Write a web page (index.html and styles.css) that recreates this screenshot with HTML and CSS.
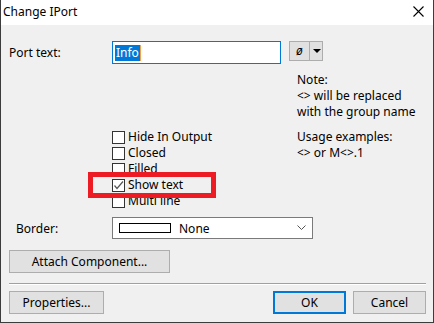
FILE: index.html
```html
<!DOCTYPE html>
<html lang="en">
<head>
    <meta charset="UTF-8">
    <title>Change IPort</title>
    <link rel="stylesheet" href="styles.css">
</head>
<body>
    <div class="window">
        <div class="titlebar">
            <span class="title">Change IPort</span>
            <svg class="close" width="11" height="11" viewBox="0 0 11 11">
                <path d="M0.5 0.5 L10.5 10.5 M10.5 0.5 L0.5 10.5" stroke="#000" stroke-width="1.1" fill="none"/>
            </svg>
        </div>

        <div class="content">
            <!-- Port text row -->
            <div class="port-row">
                <label class="label">Port text:</label>
                <div class="textbox"><span class="sel">Info</span><span class="caret"></span></div>
                <div class="split-btn">
                    <span class="split-main">ø</span>
                    <span class="split-arrow"></span>
                </div>
            </div>

            <div class="middle">
                <div class="checks">
                    <div class="check"><span class="box"></span>Hide In Output</div>
                    <div class="check"><span class="box"></span>Closed</div>
                    <div class="check"><span class="box"></span>Filled</div>
                    <div class="check"><span class="box checked">
                        <svg width="11" height="11" viewBox="0 0 11 11"><path d="M1.5 5.5 L4 8.5 L10 1.5" stroke="#555" stroke-width="1.2" fill="none"/></svg>
                    </span>Show text</div>
                    <div class="check"><span class="box"></span>Multi line</div>
                    <div class="highlight"></div>
                </div>
                <div class="note">
                    <div>Note:</div>
                    <div>&lt;&gt; will be replaced</div>
                    <div>with the group name</div>
                    <div class="gap">Usage examples:</div>
                    <div>&lt;&gt; or M&lt;&gt;.1</div>
                </div>
            </div>

            <div class="border-row">
                <label class="label label-border">Border:</label>
                <div class="combo">
                    <span class="swatch"></span>
                    <span class="combo-text">None</span>
                    <svg class="chevron" width="9" height="6" viewBox="0 0 9 6">
                        <path d="M0.5 0.5 L4.5 4.5 L8.5 0.5" stroke="#555" stroke-width="1" fill="none"/>
                    </svg>
                </div>
            </div>

            <button class="btn btn-attach">Attach Component...</button>

            <div class="separator"></div>

            <div class="bottom-row">
                <button class="btn btn-props">Properties...</button>
                <div class="right-btns">
                    <button class="btn btn-ok">OK</button>
                    <button class="btn btn-cancel">Cancel</button>
                </div>
            </div>
        </div>
    </div>
</body>
</html>
```

FILE: styles.css
```css
body {
    margin: 0;
    font-family: "Noto Sans", "Open Sans", sans-serif;
    font-size: 12px;
    color: #000;
    background: #f0f0f0;
}
.window {
    width: 434px;
    height: 323px;
    box-sizing: border-box;
    border: 1px solid #3c3c3c;
    border-top: none;
    background: #f0f0f0;
}
.titlebar {
    height: 25px;
    background: #fff;
    display: flex;
    align-items: center;
    justify-content: space-between;
    padding: 0 9px 2px 2px;
    box-sizing: border-box;
}
.title {
    font-size: 12px;
}
.content {
    padding: 16px 7px 0 8px;
}
.label {
    width: 103px;
    flex-shrink: 0;
}
.port-row {
    display: flex;
    align-items: flex-start;
    height: 23px;
}
.port-row .label {
    line-height: 23px;
}
.textbox {
    width: 169px;
    height: 23px;
    box-sizing: border-box;
    border: 1px solid #0078d7;
    background: #fff;
    display: flex;
    align-items: center;
    padding-left: 2px;
}
.sel {
    background: #0078d7;
    color: #fff;
    line-height: 16px;
    padding: 0 1px;
}
.caret {
    width: 1px;
    height: 16px;
    background: #f7a04a;
}
.split-btn {
    margin-left: 8px;
    width: 34px;
    height: 20px;
    box-sizing: border-box;
    border: 1px solid #adadad;
    background: #e1e1e1;
    display: flex;
}
.split-main {
    width: 19px;
    border-right: 1px solid #adadad;
    text-align: center;
    line-height: 18px;
    font-style: italic;
}
.split-arrow {
    flex: 1;
    position: relative;
}
.split-arrow::after {
    content: "";
    position: absolute;
    left: 3px;
    top: 7px;
    border-left: 4px solid transparent;
    border-right: 4px solid transparent;
    border-top: 4px solid #000;
}
.middle {
    display: flex;
    margin-top: 8px;
}
.checks {
    position: relative;
    margin-left: 103px;
    padding-top: 57px;
    width: 185px;
}
.check {
    display: flex;
    align-items: center;
    height: 16px;
    line-height: 16px;
}
.box {
    width: 13px;
    height: 13px;
    box-sizing: border-box;
    border: 1px solid #333;
    background: #fff;
    margin-right: 3px;
    display: flex;
    align-items: center;
    justify-content: center;
}
.box svg {
    display: block;
}
.highlight {
    position: absolute;
    left: -24px;
    top: 100px;
    width: 128px;
    height: 26px;
    box-sizing: border-box;
    border: 5px solid #ed1c24;
}
.note {
    line-height: 16px;
}
.note .gap {
    margin-top: 9px;
}
.border-row {
    display: flex;
    align-items: center;
    margin-top: 8px;
}
.label-border {
    padding-left: 7px;
    width: 96px;
}
.combo {
    width: 201px;
    height: 22px;
    box-sizing: border-box;
    border: 1px solid #7a7a7a;
    background: #fff;
    display: flex;
    align-items: center;
    padding-left: 6px;
}
.swatch {
    width: 52px;
    height: 10px;
    box-sizing: border-box;
    border: 1px solid #000;
    background: #fff;
}
.combo-text {
    margin-left: 8px;
    flex: 1;
}
.chevron {
    margin-right: 6px;
}
.btn {
    font-family: inherit;
    font-size: 12px;
    color: #000;
    background: #e1e1e1;
    border: 1px solid #adadad;
    height: 23px;
    padding: 0;
    box-sizing: border-box;
}
.btn-attach {
    display: block;
    width: 161px;
    margin-top: 11px;
}
.separator {
    margin: 10px 0 6px 0;
    height: 1px;
    background: #a0a0a0;
    border-bottom: 1px solid #fff;
}
.bottom-row {
    display: flex;
    justify-content: space-between;
}
.btn-props {
    width: 95px;
}
.right-btns {
    display: flex;
    gap: 7px;
}
.btn-ok {
    width: 73px;
    border: 2px solid #0078d7;
}
.btn-cancel {
    width: 73px;
}
```
